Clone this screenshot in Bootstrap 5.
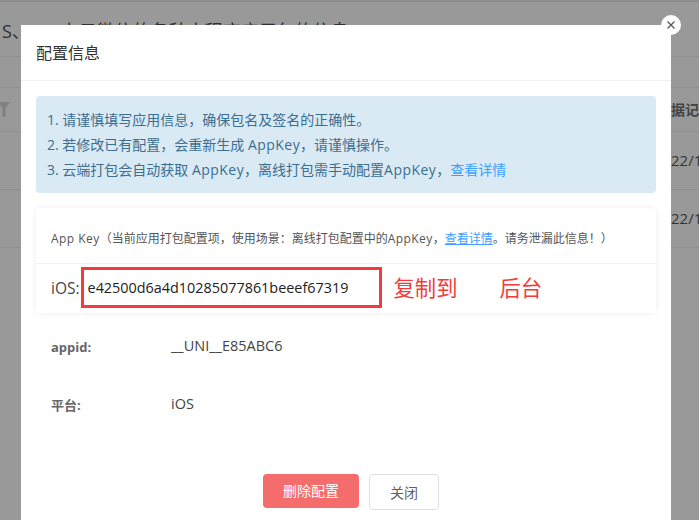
<!DOCTYPE html>
<html lang="zh">
<head>
<meta charset="utf-8">
<title>配置信息</title>
<link href="https://cdn.jsdelivr.net/npm/bootstrap@5.3.0/dist/css/bootstrap.min.css" rel="stylesheet">
<style>
html,body{height:520px;overflow:hidden}
body{background:#999;font-family:"Open Sans","Noto Sans CJK SC",sans-serif;color:#333;font-size:14px;position:relative}
.pg-top{height:2px;background:#8e8e8e}
.pg-title{height:55px;padding:16px 0 0 2px;font-size:18px;line-height:26px;color:#2f2f2f;white-space:nowrap;border-bottom:1px solid #8f8f8f}
.pg-row{border-bottom:1px solid #8f8f8f;position:relative}
.pg-r1{height:31px}
.pg-r2{height:44px}
.pg-r3{height:58px}
.pg-cellhead{font-size:14px;font-weight:600;color:#444;line-height:20px;padding:12px 0 0 671px;white-space:nowrap;overflow:hidden}
.pg-date{font-size:15px;line-height:20px;color:#333;white-space:nowrap;padding:18px 0 0 671px;overflow:hidden}
.pg-funnel{position:absolute;left:-2px;top:14px}
.dlg{position:absolute;left:21px;top:25px;width:650px;height:520px;background:#fff}
.dlg-head{height:56px;border-bottom:1px solid #f0f0f0;padding:0 15px;font-size:16px;line-height:56px;color:#333}
.dlg-body{padding:15px 15px 0}
.tip{background:#d9eaf5;border-radius:4px;height:97px;padding:11px 11px;color:#3c6e8f;font-size:14px;line-height:25px}
.tip a,.keyhead a{color:#409eff}
.tip a{text-decoration:none}
.lat{letter-spacing:.45px}
.keycard{margin-top:15px;height:105px;border-radius:4px;box-shadow:0 0 6px rgba(0,0,0,.08)}
.keyhead{height:56px;border-bottom:1px solid #f0f0f0;padding:0 15px;font-size:12px;line-height:61px;color:#555;white-space:nowrap}
.keyline{height:49px;padding:0 15px;font-size:15.5px;color:#444}
.keybox{border:3px solid #f63a3a;width:301px;height:41px;margin-left:1px;margin-bottom:2px;padding-left:4px;color:#222;font-size:14.4px;flex:none}
.redtxt{color:#f23c3c;font-size:21.3px;font-family:"Noto Sans CJK SC",sans-serif;padding-bottom:4px}
.infoline{padding-left:15px;font-size:14px;color:#555}
.infokey{width:120px;font-size:13px;font-weight:700;color:#666;padding-top:4px}
.infoval{font-size:14.5px;color:#444}
.btn-del{width:96px;height:34px;background:#f56c6c;border:0;border-radius:4px;color:#fff;font-size:14px;padding:0;line-height:34px}
.btn-del:hover{background:#f56c6c;color:#fff}
.btn-off{width:70px;height:36px;background:#fff;border:1px solid #dcdfe6;border-radius:4px;color:#606266;font-size:14px;padding:0}
.dlg-foot{position:absolute;left:242px;top:449px;gap:10px}
.xbtn{position:absolute;left:661px;top:15px;width:20px;height:20px;border-radius:50%;background:#fff;border:0;padding:0;display:block}
.xbtn svg{display:block}
</style>
</head>
<body>
<div class="pg-top"></div>
<div class="pg-title">S、UU 上云微信的各种小程序应用包的信息</div>
<div class="pg-row pg-r1"></div>
<div class="pg-row pg-r2">
  <svg class="pg-funnel" width="12" height="15" viewBox="0 0 12 15"><path d="M0 0h12L7.500 6v9h-3V6z" fill="#808080"/></svg>
  <div class="pg-cellhead">据记录</div>
</div>
<div class="pg-row pg-r3"><div class="pg-date">22/11/08</div></div>
<div class="pg-row pg-r3"><div class="pg-date">22/11/08</div></div>

<div class="dlg">
  <div class="dlg-head">配置信息</div>
  <div class="dlg-body">
    <div class="tip">
      <div>1. 请谨慎填写应用信息，确保包名及签名的正确性。</div>
      <div>2. 若修改已有配置，会重新生成 <span class="lat">AppKey</span>，请谨慎操作。</div>
      <div>3. 云端打包会自动获取 <span class="lat">AppKey</span>，离线打包需手动配置<span class="lat">AppKey</span>，<a href="#">查看详情</a></div>
    </div>
    <div class="keycard">
      <div class="keyhead"><span class="lat">App Key</span>（当前应用打包配置项，使用场景：离线打包配置中的<span class="lat">AppKey</span>，<a href="#">查看详情</a>。请务泄漏此信息！）</div>
      <div class="keyline d-flex align-items-center">
        <span>iOS:</span>
        <div class="keybox d-flex align-items-center">e42500d6a4d10285077861beeef67319</div>
        <span class="redtxt" style="margin-left:12px">复制到</span>
        <span class="redtxt" style="margin-left:42px">后台</span>
      </div>
    </div>
    <div class="infoline d-flex align-items-center" style="height:20px;margin-top:23px">
      <div class="infokey">appid:</div><div class="infoval">__UNI__E85ABC6</div>
    </div>
    <div class="infoline d-flex align-items-center" style="height:20px;margin-top:38px">
      <div class="infokey">平台:</div><div class="infoval">iOS</div>
    </div>
  </div>
  <div class="dlg-foot d-flex">
    <button type="button" class="btn btn-del">删除配置</button>
    <button type="button" class="btn btn-off">关闭</button>
  </div>
</div>
<button type="button" class="xbtn" aria-label="关闭"><svg width="20" height="20" viewBox="0 0 20 20"><path d="M6.500 6.500l7 7M13.500 6.500l-7 7" stroke="#555" stroke-width="1.200" fill="none"/></svg></button>
<script src="https://cdn.jsdelivr.net/npm/bootstrap@5.3.0/dist/js/bootstrap.bundle.min.js"></script>
</body>
</html>
